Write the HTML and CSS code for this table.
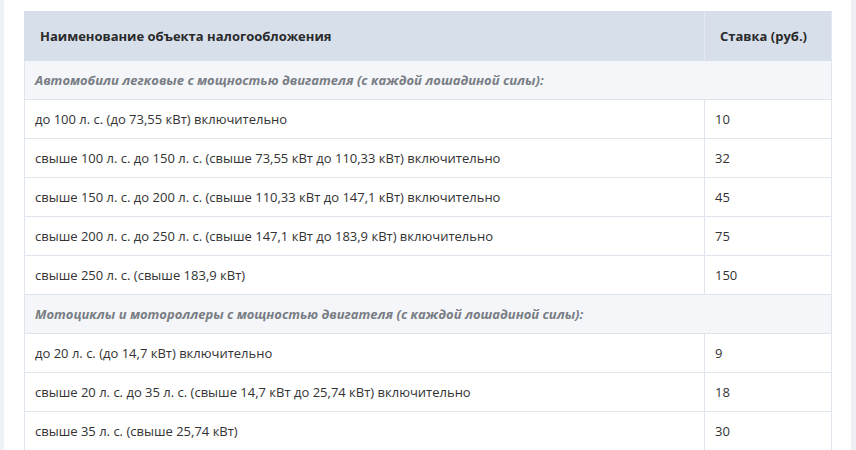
FILE: index.html
```html
<!DOCTYPE html>
<html lang="ru">
<head>
<meta charset="utf-8">
<link rel="stylesheet" href="styles.css">
</head>
<body>
<div class="strip-left"></div>
<main class="content">
<table class="tax">
<thead>
<tr><th class="c1">Наименование объекта налогообложения</th><th class="c2">Ставка (руб.)</th></tr>
</thead>
<tbody>
<tr class="cat"><td colspan="2">Автомобили легковые с мощностью двигателя (с каждой лошадиной силы):</td></tr>
<tr><td>до 100 л. с. (до 73,55 кВт) включительно</td><td>10</td></tr>
<tr><td>свыше 100 л. с. до 150 л. с. (свыше 73,55 кВт до 110,33 кВт) включительно</td><td>32</td></tr>
<tr><td>свыше 150 л. с. до 200 л. с. (свыше 110,33 кВт до 147,1 кВт) включительно</td><td>45</td></tr>
<tr><td>свыше 200 л. с. до 250 л. с. (свыше 147,1 кВт до 183,9 кВт) включительно</td><td>75</td></tr>
<tr><td>свыше 250 л. с. (свыше 183,9 кВт)</td><td>150</td></tr>
<tr class="cat"><td colspan="2">Мотоциклы и мотороллеры с мощностью двигателя (с каждой лошадиной силы):</td></tr>
<tr><td>до 20 л. с. (до 14,7 кВт) включительно</td><td>9</td></tr>
<tr><td>свыше 20 л. с. до 35 л. с. (свыше 14,7 кВт до 25,74 кВт) включительно</td><td>18</td></tr>
<tr><td>свыше 35 л. с. (свыше 25,74 кВт)</td><td>30</td></tr>
</tbody>
</table>
</main>
<div class="strip-right"></div>
</body>
</html>
```
FILE: styles.css
```css
html, body {
  margin: 0;
  padding: 0;
  background: #ffffff;
}
body {
  display: flex;
  min-height: 450px;
  font-family: "Open Sans", "Noto Sans", sans-serif;
  font-size: 13px;
  color: #333333;
}
.strip-left {
  width: 4px;
  flex: none;
  background: #eef2f7;
}
.strip-right {
  width: 5px;
  flex: none;
  background: #eef0f3;
}
.content {
  flex: 1;
  padding: 11px 20px 0 20px;
  overflow: hidden;
}
.tax {
  width: 807px;
  border-collapse: collapse;
  table-layout: fixed;
}
.tax th, .tax td {
  border: 1px solid #dfe5ec;
  text-align: left;
  vertical-align: middle;
  line-height: 20px;
}
.tax th {
  background: #d6dfea;
  font-weight: 700;
  padding: 14px 15px 14px 15px;
  border-color: #d6dfea #e4e9ef #d6dfea #d6dfea;
  color: #2a2a2a;
}
.tax .c1 { width: 649px; }
.tax .c2 { width: 96px; }
.tax td {
  padding: 9px 10px 9px 10px;
}
.tax .cat td {
  background: #f4f6fa;
  font-style: italic;
  font-weight: 700;
  color: #797d84;
}
```
